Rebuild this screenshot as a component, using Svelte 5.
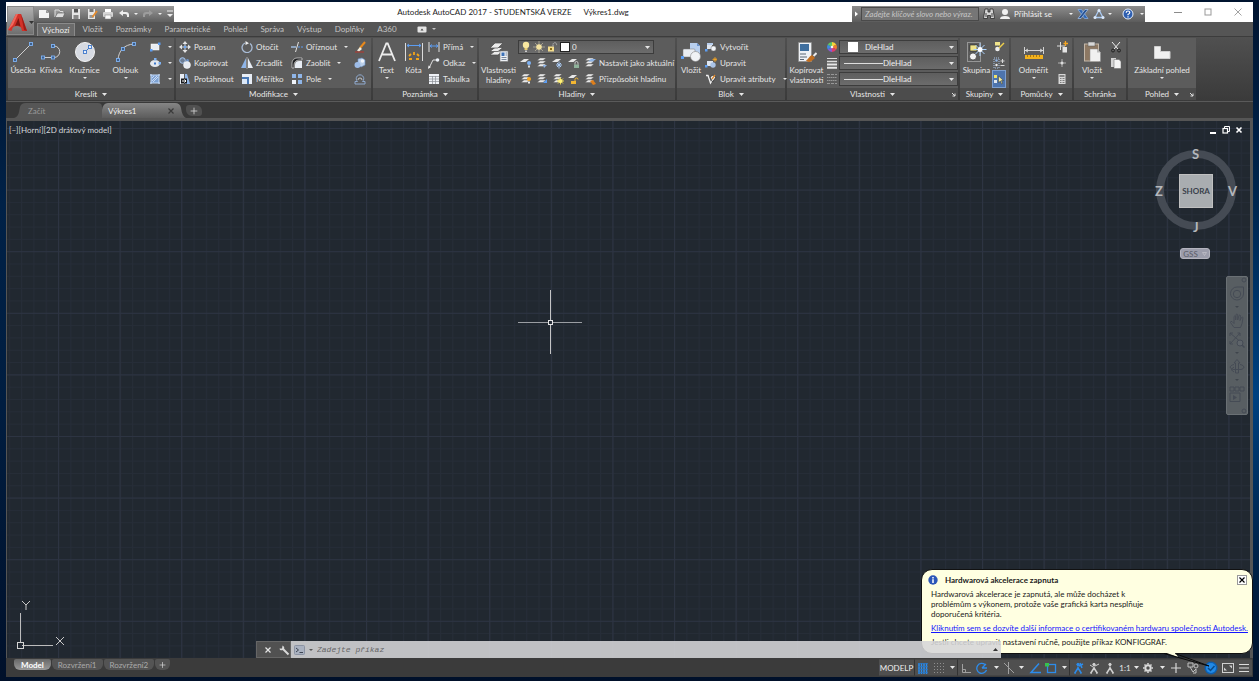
<script>
  const node = (x, y) => `<rect x="${x - 1.5}" y="${y - 1.5}" width="3" height="3" fill="#3d5f8c" stroke="#7fb2f2" stroke-width=".9"/>`;
  const sheets = `<g fill="#e8e8e8" stroke="#555" stroke-width=".4"><path d="M1 9.500l3-2.500h6l-3 2.500z"/><path d="M1 6.500l3-2.500h6l-3 2.500z"/><path d="M1 3.500l3-2.500h6l-3 2.500z"/></g>`;
  const sheetOne = `<path d="M0 5l4-3h5l-3.500 3z" fill="#e8e8e8"/>`;
  const person = (c, extra = '') => `<g fill="none" stroke="${c}" stroke-width="1.500"><circle cx="6" cy="2.500" r="1.200" fill="${c}" stroke-width="1"/><path d="M6 4.500v2.500M6 6L2.500 11.500M6 6l3.500 5.500M4 9l-1 2.500M8 9l1 2.500"/>${extra}</g>`;

  const icons = {
    line: [20, 20, `<path d="M2 18L18 2" stroke="#cfcfcf"/>${node(2, 18)}${node(18, 2)}`],
    polyline: [20, 20, `<path d="M2 15.500h11a5.700 5.700 0 0 0 0-11.500h-1" fill="none" stroke="#cfcfcf"/>${node(2, 15.5)}${node(12, 15.5)}${node(12, 4)}`],
    circle: [20, 20, `<circle cx="10" cy="10" r="9.500" fill="#d6dae2" stroke="#f4f4f4"/><path d="M10 10l5-5" stroke="#3976c9"/><rect x="8.500" y="8.500" width="3" height="3" fill="#e8eefa" stroke="#3d78cc" stroke-width=".9"/><rect x="13.500" y="3.500" width="3" height="3" fill="#e8eefa" stroke="#3d78cc" stroke-width=".9"/>`],
    arc: [20, 20, `<path d="M2 18C2.500 9 8 2.500 18 2" fill="none" stroke="#cfcfcf"/>${node(2, 18)}${node(7, 7)}${node(18, 2)}`],
    rect: [12, 12, `<rect x="2" y="3" width="8" height="6" fill="#e8ecf2" stroke="#fff" stroke-width=".5"/><rect x="1" y="8" width="2.500" height="2.500" fill="#5c9df2"/><rect x="9" y="1.500" width="2.500" height="2.500" fill="#5c9df2"/>`],
    ellipse: [12, 12, `<ellipse cx="6" cy="6.500" rx="5" ry="3.500" fill="#e4e8ef"/><rect x="5" y="5.500" width="2" height="2" fill="#3d78cc"/><rect x="5" y="1" width="2.500" height="2.500" fill="#7fb2f2"/><rect x="9.500" y="5" width="2.500" height="2.500" fill="#7fb2f2"/>`],
    hatch: [12, 12, `<rect x="2" y="2" width="8" height="8" fill="#7fa3d4"/><path d="M1 2h10M1 10h10M2 1v10M10 1v10" stroke="#c5dcfb"/><path d="M3 8l5-5M4 9l5-5M3 5l2-2" stroke="#dce9fb" stroke-width=".8"/>`],
    move: [12, 12, `<path d="M6 0l2.500 3h-5zM6 12l2.500-3h-5zM0 6l3-2.500v5zM12 6L9 3.500v5z" fill="#e4e4e4"/><path d="M6 3v6M3 6h6" stroke="#c8d8ee"/><rect x="5" y="5" width="2" height="2" fill="#6ba6f2"/>`],
    copy: [12, 12, `<circle cx="3.500" cy="3.500" r="2.800" fill="#6e7f96" stroke="#a9c9f2"/><circle cx="8.500" cy="3.500" r="1.500" fill="#6e94c8"/><circle cx="8" cy="8" r="3.500" fill="#e6ebf2" stroke="#fff" stroke-width=".5"/>`],
    stretch: [12, 12, `<path d="M1 1h4v10H1z" fill="#e8edf5"/><path d="M6 1h2l3 10H6z" fill="#8fb5e8"/><rect x="2" y="5.500" width="6" height="5" fill="#17191c"/><path d="M3 8h4M5.500 6.500L7 8 5.500 9.500" stroke="#fff" fill="none"/>`],
    rotate: [12, 12, `<path d="M4 2a5 5 0 1 0 5 .5" fill="none" stroke="#a9bcd6" stroke-width="1.300"/><path d="M4.500 0L8 2.200 4.500 4z" fill="#eee"/>`],
    mirror: [12, 12, `<path d="M5 1v10H0z" fill="#8fb5e8"/><path d="M7 1v10h5z" fill="#e8edf5"/><path d="M6 0v12" stroke="#ddd" stroke-width=".6"/>`],
    scale: [12, 12, `<rect x="1" y="1" width="10" height="10" fill="#e8edf5"/><path d="M1 4h7v7H1z" fill="#4a78b5"/><rect x="1" y="6" width="5" height="5" fill="#dce8f8"/>`],
    trim: [12, 12, `<path d="M7.500 1L4.500 11" stroke="#e0e0e0"/><path d="M0 6h5" stroke="#a9c9f2" stroke-width="1.300"/><path d="M7 6h5" stroke="#5c9df2" stroke-dasharray="2 1"/>`],
    fillet: [12, 12, `<path d="M1 11V6a5 5 0 0 1 5-5h5v2H8a5 5 0 0 0-5 5v3z" fill="#1f2022" stroke="#ddd" stroke-width=".7"/><path d="M4 11V8a4 4 0 0 1 4-4h3v7z" fill="#e8edf5"/>`],
    array: [12, 12, `<rect x="1" y="1" width="4" height="4" fill="#8fb5e8"/><rect x="7" y="1" width="4" height="4" fill="#8fb5e8"/><rect x="7" y="7" width="4" height="4" fill="#8fb5e8"/><rect x="1" y="7" width="4" height="4" fill="#f0f4fa"/>`],
    erase: [12, 12, `<path d="M11 1L6 7" stroke="#e8891c" stroke-width="2"/><path d="M6 6l2 2-3 2.500-2-1z" fill="#f1ecdd"/><path d="M1 11h9" stroke="#b8352a"/>`],
    explode: [12, 12, `<path d="M4 2l4-1 3 2v5l-4 2-3-2z" fill="#bcd0ea" stroke="#6d94c9" stroke-width=".6"/><circle cx="3.500" cy="8" r="3" fill="#9dbce8"/><circle cx="8.500" cy="4" r="1.800" fill="#f2f6fc"/>`],
    offset: [12, 12, `<path d="M1 11h10V8.500H8.500a3.800 3.800 0 1 0-5 0H1z" fill="none" stroke="#8fa9cd"/><path d="M4 7a2 2 0 1 1 4 0" fill="none" stroke="#ddd" stroke-width=".8"/>`],
    textA: [20, 20, `<path d="M2 19L9.300 1.500h1.400L18 19M5 12.500h10" fill="none" stroke="#ececec" stroke-width="1.800"/>`],
    dim: [20, 20, `<path d="M1.500 1v18M18.500 1v18" stroke="#dcdcdc"/><path d="M3 3.500h14M5 2L3 3.500 5 5M15 2l2 1.500L15 5" stroke="#5c9df2" fill="none"/><path d="M7 12l-2 2M10 10v3M13 12l2 2M5 17h3M12 17h3" stroke="#f2a51a" stroke-width="1.800"/>`],
    linear: [12, 12, `<path d="M1 1v10M11 1v10" stroke="#e0e0e0"/><path d="M2 5h8M4 3.500L2 5l2 1.500M8 3.500L10 5 8 6.500" stroke="#5c9df2" fill="none"/>`],
    leader: [12, 12, `<path d="M1 11L5 3h3" fill="none" stroke="#e0e0e0"/><circle cx="9.500" cy="3" r="1.800" fill="#eef3fa"/><path d="M0 12l.5-3.500L3 10z" fill="#eee"/>`],
    table: [12, 12, `<rect x="1" y="1" width="10" height="10" fill="#eef1f6"/><path d="M1 3.500h10M1 6h10M1 8.500h10M4.500 3v8M7.500 3v8" stroke="#8b8f96" stroke-width=".7"/>`],
    layerProps: [20, 20, `<g fill="#ececec" stroke="#4b4b4b" stroke-width=".7"><path d="M1 13l5-4h8l-5 4z"/><path d="M1 9.500l5-4h8l-5 4z"/><path d="M1 6l5-5h8l-5 5z"/></g><rect x="11" y="9" width="8" height="10.500" fill="#eef1f6" stroke="#777" stroke-width=".6"/><rect x="12.500" y="10.500" width="3" height="3.500" fill="#3d72b8"/><path d="M16.500 11h1.500M16.500 13h1.500M12.500 15.500h5M12.500 17.500h5" stroke="#5c6f88" stroke-width=".8"/>`],
    bulb: [12, 12, `<circle cx="6" cy="4" r="3.200" fill="#f8e7a0"/><path d="M4.500 7h3v2h-3z" fill="#e9cf73"/><path d="M5 9.500h2v1.500H5z" fill="#ccc"/>`],
    sun: [12, 12, `<path d="M6 0v12M0 6h12M2 2l8 8M10 2l-8 8" stroke="#b5b09c" stroke-width=".8"/><circle cx="6" cy="6" r="2.800" fill="#f3e2a0"/>`],
    unlock: [12, 12, `<rect x="2" y="5.500" width="6" height="5" fill="#f3dc8c"/><path d="M7 5.500V3.500a1.800 1.800 0 0 1 3.600 0v1" fill="none" stroke="#bbb" stroke-dasharray="1.500 .5"/><rect x="4" y="7" width="2" height="2" fill="#8c6d1a"/>`],
    white: [12, 12, `<rect x="1.500" y="1.500" width="9" height="9" fill="#fff" stroke="#222"/>`],
    l1: [12, 12, `${sheetOne}<circle cx="9" cy="6" r="2" fill="#7fb2f2"/><path d="M8 8.500h2v2H8z" fill="#ddd"/>`],
    l2: [12, 12, `${sheets}<path d="M7 8l4 0-3 3z" fill="#8fb5e8"/>`],
    l3: [12, 12, `${sheetOne}<path d="M7 4.500v7M4 8h6M5 6l4 4M9 6l-4 4" stroke="#a9c9f2"/>`],
    l4: [12, 12, `${sheetOne}<rect x="6" y="7.500" width="5" height="3.500" fill="#8fb29a"/><path d="M7 7.500V6a1.500 1.500 0 0 1 3 0v1.500" fill="none" stroke="#ddd" stroke-width=".8"/>`],
    l5: [12, 12, `${sheets}<path d="M4 4.500l3-2.500h5L9 4.500z" fill="#8fb5e8"/>`],
    l6: [12, 12, `${sheets}<circle cx="9" cy="6" r="2" fill="#f5a623"/><path d="M8 8.500h2v2H8z" fill="#eee"/>`],
    l7: [12, 12, `${sheets}<path d="M7 10l4-4v4z" fill="#5c9df2"/>`],
    l8: [12, 12, `${sheets}<path d="M8.500 4.500v7M5 8h7M6 5.500l5 5M11 5.500l-5 5" stroke="#f7e04a" stroke-width=".9"/><circle cx="8.500" cy="8" r="2" fill="#fff27a"/>`],
    l9: [12, 12, `${sheetOne}<rect x="3" y="8" width="5" height="3" fill="#f2b632"/><path d="M7 8V6.500a1.500 1.500 0 0 1 3 0" fill="none" stroke="#f2b632"/>`],
    l10: [12, 12, `${sheets}<path d="M6 8l3-1 3 4-3 1z" fill="#e07f1b"/>`],
    insert: [20, 20, `<path d="M9 1h7l3 3v9H9z" fill="#b9cfee"/><path d="M16 1v3h3z" fill="#6b94d0"/><rect x="2" y="7" width="12" height="8" rx="1" fill="#e8ecf2" stroke="#777" stroke-width=".5"/><circle cx="14.500" cy="14.500" r="5" fill="#f0f2f5" stroke="#888" stroke-width=".6"/><rect x="0" y="14" width="3" height="3" fill="#5c9df2"/>`],
    bcreate: [12, 12, `<path d="M2 2h6v2H2z" fill="#b9cfee"/><rect x="2" y="4" width="5" height="4" fill="#dfe6f0"/><rect x="6" y="5" width="5" height="5" rx="2" fill="#f3f5f8" stroke="#666" stroke-width=".5"/><rect x="0" y="8" width="2.500" height="2.500" fill="#5c9df2"/>`],
    bedit: [12, 12, `<rect x="2" y="4" width="6" height="5" fill="#dfe6f0"/><circle cx="8" cy="8" r="2.700" fill="#aac4e8"/><path d="M10 0v5M7.500 2.500h5M8.500 1l3 3M11.500 1l-3 3" stroke="#f5a623" stroke-width=".8"/><rect x="0" y="8" width="2.500" height="2.500" fill="#5c9df2"/>`],
    battr: [12, 12, `<path d="M1 2.500h2l2.500 7.500 2-3" fill="none" stroke="#f0f0f0" stroke-width="1.300"/><path d="M5 4l3-2 3 2-3.500 5z" fill="#eee" stroke="#222" stroke-width=".7"/><path d="M7 6l3-4" stroke="#d9852a" stroke-width="1.300"/>`],
    matchProps: [20, 20, `<rect x="1.500" y=".5" width="13" height="19" fill="#eef1f6" stroke="#888" stroke-width=".6"/><rect x="3" y="2" width="9" height="7" fill="#3f6f9f"/><path d="M3 12h6M3 15h7M3 17.500h4" stroke="#5b6675"/><path d="M19.500 11l-3 3" stroke="#ececec" stroke-width="2"/><path d="M15 13l3 3-4 3.500c-2 1-4 0-5-1 2-1 3-4 6-5.500z" fill="#c26f20"/>`],
    wheel: [12, 12, `<path d="M6 6V1a5 5 0 0 1 4.300 2.500z" fill="#f4d33a"/><path d="M6 6l4.300-2.500a5 5 0 0 1 0 5z" fill="#f07d2a"/><path d="M6 6l4.300 2.500A5 5 0 0 1 6 11z" fill="#de3d6d"/><path d="M6 6v5a5 5 0 0 1-4.300-2.500z" fill="#8a5bd0"/><path d="M6 6L1.700 8.500a5 5 0 0 1 0-5z" fill="#3f8be0"/><path d="M6 6L1.700 3.500A5 5 0 0 1 6 1z" fill="#62c462"/><circle cx="6" cy="6" r="1.300" fill="#f4f4f4"/>`],
    weights: [12, 12, `<path d="M1 1.500h10" stroke="#ddd"/><path d="M1 4.500h10" stroke="#ddd" stroke-width="1.500"/><path d="M1 7.500h10M1 10.800h10" stroke="#e8e8e8" stroke-width="2"/>`],
    ltypes: [12, 12, `<path d="M1 1.500h10M1 10.500h10" stroke="#989898" stroke-dasharray="3 1"/><path d="M1 4.500h10M1 7.500h10" stroke="#989898" stroke-dasharray="1.500 .5"/>`],
    group: [20, 20, `<rect x=".5" y=".5" width="13" height="19" fill="none" stroke="#d0d0d0" stroke-dasharray="1 1"/><rect x="3" y="3" width="7" height="6" fill="#f0e48a" stroke="#222" stroke-width=".6"/><circle cx="6" cy="14.500" r="3.500" fill="#f2f2f2" stroke="#222" stroke-width=".6"/><path d="M13 1v13M6.500 7.500h13M8.500 3l9 9M17.500 3l-9 9" stroke="#a9d2ff"/><circle cx="13" cy="7.500" r="2.500" fill="#fff"/>`],
    ungroup: [12, 12, `<rect x="2" y="1" width="5" height="3.500" fill="#f0e48a"/><circle cx="4.500" cy="8" r="2.300" fill="#eee"/><path d="M11 2L6 7" stroke="#f0d04a" stroke-width="1.500"/>`],
    groupEdit: [12, 12, `<rect x="1" y="1" width="5" height="10" fill="none" stroke="#aac4e8" stroke-dasharray="1 1"/><circle cx="3.500" cy="3.500" r="1.200" fill="#8fb5e8"/><circle cx="3.500" cy="8" r="1.200" fill="#eee"/><path d="M9.500 2v4M7.500 4h4M7.500 8.500h4" stroke="#d8d8d8"/>`],
    groupSel: [12, 12, `<rect x="1" y="2" width="3" height="3" fill="#efe06c"/><rect x="1" y="7" width="3" height="3" fill="#dfe6ee"/><path d="M5.500 3l5 4.500H8.500l1 3-1 .500-1-3-2 1.500z" fill="#f5eda0" stroke="#333" stroke-width=".5"/>`],
    measure: [20, 20, `<path d="M.5 5v7M19.500 5v7M1 8.500h18M4 7L1.500 8.500 4 10M16 7l2.500 1.500L16 10" fill="none" stroke="#e0e0e0" stroke-width=".9"/><rect x="1" y="13" width="18" height="4" fill="#f2b21e"/><path d="M3.500 13v2M6.500 13v2M9.500 13v2M12.500 13v2M15.500 13v2" stroke="#8c5d08" stroke-width=".7"/>`],
    idpoint: [12, 12, `<path d="M4.500 1v8M1 5h8" stroke="#ddd"/><rect x="6.500" y="6" width="4.500" height="5.500" fill="#e4e4e4"/><path d="M9.500 0v5M7.500 2.500h4.500" stroke="#f5a623" stroke-width="1.300"/>`],
    point: [12, 12, `<path d="M6 2v8M2 6h8" stroke="#b0b0b0"/><circle cx="6" cy="6" r="1.500" fill="#dcdcdc"/>`],
    calc: [12, 12, `<rect x="2.500" y="1" width="7" height="10" fill="#d8d8d8"/><path d="M3.500 3h5" stroke="#555" stroke-width="1.300"/><path d="M4 5.500h5M4 7.500h5M4 9.500h5" stroke="#666" stroke-width=".8" stroke-dasharray="1 .5"/>`],
    paste: [20, 20, `<rect x="2.500" y="2" width="14" height="17" fill="#8d7863" stroke="#c3b7a9"/><rect x="6" y="0" width="7" height="4" fill="#d8d8d8" stroke="#555" stroke-width=".5"/><path d="M8 7h7l3.500 3.500V19.500H8z" fill="#f0f0f0" stroke="#888" stroke-width=".5"/><path d="M15 7v3.500h3.500z" fill="#bbb"/>`],
    cut: [12, 12, `<path d="M2 1l6 7M10 1L4 8" stroke="#efefef"/><circle cx="3" cy="9.500" r="1.500" fill="none" stroke="#222"/><circle cx="9" cy="9.500" r="1.500" fill="none" stroke="#222"/>`],
    clip: [12, 12, `<path d="M1 1h5v9H1z" fill="#d4d4d4"/><path d="M4 2.500h5l2 2V11.500H4z" fill="#f4f4f4" stroke="#666" stroke-width=".5"/>`],
    baseView: [20, 20, `<path d="M2.500 4.500h6v5h9.500v7H2.500z" fill="#f0f0f0" stroke="#cfcfcf"/>`],
    newDoc: [12, 12, `<path d="M1 2h7l3 3v5H1z" fill="#f4f4f4"/><path d="M8 2v3h3z" fill="#999"/>`],
    open: [12, 12, `<path d="M1 9V2h4l1 1.500h3V5" fill="#999" stroke="#ddd"/><path d="M1 9.500l2.500-4.500H11L9 9.500z" fill="#ddd" stroke="#555" stroke-width=".6"/>`],
    save: [12, 12, `<path d="M2 1h8v10H2z" fill="#e6e6e6"/><rect x="4" y="1" width="4" height="3.500" fill="#555"/><rect x="3.500" y="7" width="5" height="4" fill="#888"/>`],
    saveAs: [12, 12, `<path d="M2 1h7v10H2z" fill="#e6e6e6"/><rect x="3.500" y="1" width="4" height="3" fill="#777"/><path d="M3.500 7h4v3h-4z" fill="#999"/><path d="M11 3L6.500 9" stroke="#e58c2e" stroke-width="1.800"/>`],
    print: [12, 12, `<rect x="3" y="1" width="6" height="4" fill="#fff"/><rect x="1" y="4" width="10" height="5" rx="1" fill="#d6d6d6"/><rect x="3" y="7" width="6" height="4" fill="#fafafa" stroke="#777" stroke-width=".5"/>`],
    undo: [12, 12, `<path d="M1 5l4-3v2h3q3 0 3 3v2H9V7.500Q9 6 7.500 6H5v2z" fill="#eee"/>`],
    redo: [12, 12, `<path d="M11 5L7 2v2H4Q1 4 1 7v2h2V7.500Q3 6 4.500 6H7v2z" fill="#9c9c9c"/>`],
    more: [8, 10, `<path d="M1 2h6" stroke="#eee"/><path d="M1 5h6L4 8z" fill="#eee"/>`],
    logo: [22, 22, `<path d="M9 2h5l6 17h-5l-1-3.500C10 13 7 14 5.500 16L4.500 19 1 18z" fill="#d23229"/><path d="M9 2l2 0-5 11-5 5z" fill="#f0685c"/><path d="M11.500 6L8 14q3-1 5.500.500z" fill="#7f1712"/><path d="M14 2l6 17-3-1z" fill="#9e1d17"/>`],
    binoc: [12, 12, `<path d="M2 1h3v3h2V1h3l1.500 9.500h-4V7.500h-3v3H.5z" fill="#d8d8d8" stroke="#2b2b2b" stroke-width=".8"/><path d="M3 5v4M9 5v4" stroke="#444"/>`],
    user: [12, 12, `<circle cx="6" cy="4" r="3" fill="#f0f0f0"/><path d="M1 11q0-3 5-3t5 3z" fill="#f0f0f0"/>`],
    exch: [12, 12, `<path d="M1 1.500h3.500l6.500 9H7.500z" fill="#3268b4" stroke="#8fb5e8" stroke-width=".7"/><path d="M11 1.500H8l-7 9h3z" fill="#28518f" stroke="#a9c9f2" stroke-width=".7"/>`],
    a360: [12, 12, `<path d="M6 2L2 9.500h8z" fill="none" stroke="#a9c9f2" stroke-width="1.300"/><circle cx="6" cy="2.500" r="1.500" fill="#dce9fa"/><circle cx="2" cy="9.500" r="1.500" fill="#dce9fa"/><circle cx="10" cy="9.500" r="1.500" fill="#dce9fa"/>`],
    help: [12, 12, `<circle cx="6" cy="6" r="5" fill="#2d5eb0" stroke="#e6eefa"/><path d="M4.200 4.700Q4.300 3 6 3t1.800 1.500Q7.800 5.500 6 6.500v.8M6 8.200v1.200" fill="none" stroke="#fff" stroke-width="1.200"/>`],
    gridOn: [12, 12, `<path d="M2 1v11M4.500 1v11M7 1v11M9.500 1v11" stroke="#2d8ceb" stroke-width="1.500"/><path d="M1 1.500h10M1 4.500h10M1 7.500h10M1 10.500h10" stroke="#2876c4" stroke-width=".8"/>`],
    dots: [12, 12, `<path d="M1 1.500h11M1 4.500h11M1 7.500h11M1 10.500h11" stroke="#8f8f8f" stroke-dasharray="1 2"/>`],
    ortho: [12, 12, `<path d="M2.500 2v8.500H11M2.500 7.500h3v3" fill="none" stroke="#a0a0a0"/>`],
    polar: [12, 12, `<path d="M10.500 8A5 5 0 1 1 9 2.500M6 6h5M6 6l4-4" fill="none" stroke="#2d8ceb" stroke-width="1.300"/>`],
    iso: [12, 12, `<path d="M1 1l10 10M5.500 0v12" stroke="#a0a0a0"/>`],
    angle: [12, 12, `<path d="M10 1.500L2 10.500h10" fill="none" stroke="#2d8ceb" stroke-width="1.500"/>`],
    osnap: [12, 12, `<rect x="2.500" y="2.500" width="8" height="8" fill="none" stroke="#2d8ceb" stroke-width="1.300"/><rect x="0" y="1" width="4" height="3.500" fill="#37c24d"/>`],
    p1: [12, 12, person('#2d8ceb', '<path d="M7 4l4-2M8 1l2 5"/>')],
    p2: [12, 12, person('#d0d0d0', '<path d="M7 4l4-2M2 3l3 2" stroke-width="1"/>')],
    p3: [12, 12, person('#d0d0d0')],
    gear: [12, 12, `<circle cx="6" cy="6" r="2.700" fill="none" stroke="#dadada" stroke-width="2"/><path d="M6 1v1.500M6 9.500V11M1 6h1.500M9.500 6H11M2.500 2.500l1 1M8.500 8.500l1 1M9.500 2.500l-1 1M3.500 8.500l-1 1" stroke="#dadada" stroke-width="1.500"/>`],
    plus: [12, 12, `<path d="M6 1v10M1 6h10" stroke="#d8d8d8" stroke-width="1.200"/>`],
    isolate: [12, 12, `<path d="M1 1h5v4H1z" fill="none" stroke="#c0c0c0"/><circle cx="9" cy="4" r="2" fill="none" stroke="#c0c0c0"/><path d="M3 5l3 5 3-3v4H6" fill="none" stroke="#c0c0c0"/>`],
    hw: [14, 14, `<circle cx="7" cy="7" r="6.500" fill="#0d5fb0"/><circle cx="7" cy="7" r="5" fill="#2189e6"/><path d="M4 7l2.500 2.500L10.500 5" fill="none" stroke="#0b4a88" stroke-width="1.500"/>`],
    clean: [12, 12, `<rect x=".5" y="1.500" width="11" height="9" fill="none" stroke="#d0d0d0"/><path d="M7 3.500h3v3zM5 8.500H2v-3z" fill="#d0d0d0"/>`],
    burger: [12, 12, `<path d="M1 2.500h10M1 6h10M1 9.500h10" stroke="#dcdcdc" stroke-width="1.200"/>`],
    min: [12, 12, `<path d="M2 6.500h8" stroke="#8b8b8b"/>`],
    max: [12, 12, `<rect x="3" y="3" width="6" height="6" fill="none" stroke="#999"/>`],
    close: [12, 12, `<path d="M2.500 2.500l7 7M9.500 2.500l-7 7" stroke="#8b8b8b" stroke-width=".8"/>`],
    vmin: [10, 10, `<path d="M2 8h6" stroke="#fff" stroke-width="2"/>`],
    vmax: [10, 10, `<path d="M3.500 3V1.500h5V6.500H7" fill="none" stroke="#fff"/><rect x="2" y="3.500" width="4.500" height="4.500" fill="none" stroke="#fff" stroke-width="1.200"/>`],
    vclose: [10, 10, `<path d="M2.500 2.500l5 5M7.500 2.500l-5 5" stroke="#fff" stroke-width="1.600"/>`],
    swatch: [12, 12, `<rect x="1" y="1" width="10" height="10" fill="#fff"/>`],
    wrench: [12, 12, `<path d="M5 5l5.500 5.500" stroke="#d8d8d8" stroke-width="2"/><path d="M1.500 4.500L4 4.500 4.500 1.500Q7 3 6 5T2 6z" fill="#d8d8d8"/>`],
    x: [8, 8, `<path d="M1.500 1.500l5 5M6.500 1.500l-5 5" stroke="currentColor" stroke-width="1.200"/>`],
    prompt: [11, 10, `<rect x=".5" y=".5" width="10" height="9" rx="1" fill="#a9b1c0" stroke="#8b93a3"/><path d="M2 3l2.500 2L2 7M5.500 7.500H9" fill="none" stroke="#3c4452"/>`],
    info: [10, 10, `<circle cx="5" cy="5" r="4.700" fill="#2c56b8"/><path d="M5 2v1.400M5 4.300V8" stroke="#fff" stroke-width="1.500"/>`],
    wheelNav: [16, 16, `<path d="M8 1h6.500v7A6.500 6.500 0 1 1 8 1z" fill="none" stroke="#454b55"/><circle cx="8" cy="8" r="3.700" fill="none" stroke="#454b55"/>`],
    hand: [16, 16, `<path d="M5 14.500L1.500 9.500q0-1.500 1.500-1l2 2V3.500q1-1.500 1.700 0V7l.3-5.500q1-1 1.700 0V7L10 2.500q1-1 1.500 0L11 7.500l1.500-3q1-.8 1.500 0Q13.500 11 11.500 14.500z" fill="none" stroke="#454b55" stroke-width=".9"/>`],
    zoomNav: [16, 16, `<path d="M1 1l12 10M11 1L1 12M1 4V1h3M8.500 1H11v3M1 9v3h3" fill="none" stroke="#454b55"/><circle cx="11" cy="11" r="3" fill="#5e646a" stroke="#454b55"/><path d="M13 13l2.500 2.500" stroke="#454b55" stroke-width="1.500"/>`],
    orbit: [16, 16, `<path d="M6.500 14V4H5l3-3.500L11 4H9.500v10z" fill="none" stroke="#454b55"/><path d="M5 5.500C0 6.500 0 10 5 10.500h7M11 5.500c5 1 5 4 1 5M5 8L2 10.500 5 13" fill="none" stroke="#454b55"/>`],
    motion: [16, 16, `<path d="M1 1h4v4H1zM6 1h4v4H6zM11 1h4v4h-4zM1 7h10v8.500H1z" fill="none" stroke="#454b55"/><path d="M4 9v5l4-2.500z" fill="#454b55"/>`],
    dot: [6, 6, `<circle cx="3" cy="3" r="2" fill="none" stroke="#454b55"/>`],
    play: [10, 7, `<rect x=".5" y=".5" width="9" height="6" rx="1" fill="#e4e4e4"/><path d="M3.500 4.500L5 2.500l1.500 2z" fill="#444"/>`],
    launcher: [5, 5, `<path d="M1 1l3 3M4 1.500V4H1.500" fill="none" stroke="#e0e0e0"/>`]
  };

  const menu = ['Vložit', 'Poznámky', 'Parametrické', 'Pohled', 'Správa', 'Výstup', 'Doplňky', 'A360'];
  const props = ['weights', 'ltypes'];
</script>

{#snippet ico(name)}
  <svg class="ico" width={icons[name][0]} height={icons[name][1]} viewBox="0 0 {icons[name][0]} {icons[name][1]}" aria-hidden="true">{@html icons[name][2]}</svg>
{/snippet}

{#snippet caret()}
  <svg class="ico" width="5" height="3" viewBox="0 0 5 3" aria-hidden="true"><path d="M0 0h5L2.500 3z" fill="currentColor" /></svg>
{/snippet}

{#snippet mini()}
  <svg class="ico mini" width="4" height="2" viewBox="0 0 4 2" aria-hidden="true"><path d="M0 0h4L2 2z" fill="currentColor" /></svg>
{/snippet}

{#snippet big(name, label, menuArrow, second)}
  <button class="big">
    {@render ico(name)}
    <span>{label}</span>
    {#if second}<span>{second}</span>{/if}
    {#if menuArrow}{@render mini()}{/if}
  </button>
{/snippet}

{#snippet tool(name, label, menuArrow)}
  <button class="tool">
    {@render ico(name)}
    {#if label}<span>{label}</span>{/if}
    {#if menuArrow}{@render mini()}{/if}
  </button>
{/snippet}

{#snippet foot(label, arrow, launch)}
  <footer>
    <span>{label}</span>
    {#if arrow}{@render caret()}{/if}
    {#if launch}<i>{@render ico('launcher')}</i>{/if}
  </footer>
{/snippet}

<div class="desktop">
  <div class="window">
    <header class="top">
      <button class="app">{@render ico('logo')}{@render caret()}</button>
      <div class="title">
        <div class="qat">
          {#each ['newDoc', 'open', 'save', 'saveAs', 'print', 'undo'] as n}<button>{@render ico(n)}</button>{/each}
          {@render mini()}
          <button class="dim">{@render ico('redo')}</button>
          {@render mini()}
          <button class="last">{@render ico('more')}</button>
        </div>
        <h1><span>Autodesk AutoCAD 2017 - STUDENTSKÁ VERZE</span><span>Výkres1.dwg</span></h1>
        <div class="info">
          <svg class="ico" width="9" height="16" viewBox="0 0 9 16"><path d="M3 5.500v5L6 8z" fill="#fff" /></svg>
          <input class="search" aria-label="Hledat" placeholder="Zadejte klíčové slovo nebo výraz." />
          <button>{@render ico('binoc')}</button>
          <button class="login">{@render ico('user')}<span>Přihlásit se</span></button>
          {@render mini()}
          <button>{@render ico('exch')}</button>
          <button>{@render ico('a360')}{@render mini()}</button>
          <button class="help">{@render ico('help')}{@render mini()}</button>
        </div>
        <div class="winbtns">
          {#each ['min', 'max', 'close'] as n}<button>{@render ico(n)}</button>{/each}
        </div>
      </div>
      <nav class="menu">
        <button class="active">Výchozí</button>
        {#each menu as m}<button>{m}</button>{/each}
        <button class="play">{@render ico('play')}{@render mini()}</button>
      </nav>
    </header>

    <div class="ribbon">
      <section class="p-draw">
        <div class="body">
          {@render big('line', 'Úsečka')}
          {@render big('polyline', 'Křivka')}
          {@render big('circle', 'Kružnice', true)}
          {@render big('arc', 'Oblouk', true)}
          <div class="col">
            {@render tool('rect', '', true)}
            {@render tool('ellipse', '', true)}
            {@render tool('hatch', '', true)}
          </div>
        </div>
        {@render foot('Kreslit', true)}
      </section>
      <section class="p-modify">
        <div class="body">
          <div class="col">
            {@render tool('move', 'Posun')}
            {@render tool('copy', 'Kopírovat')}
            {@render tool('stretch', 'Protáhnout')}
          </div>
          <div class="col">
            {@render tool('rotate', 'Otočit')}
            {@render tool('mirror', 'Zrcadlit')}
            {@render tool('scale', 'Měřítko')}
          </div>
          <div class="col">
            {@render tool('trim', 'Oříznout', true)}
            {@render tool('fillet', 'Zaoblit', true)}
            {@render tool('array', 'Pole', true)}
          </div>
          <div class="col">
            {@render tool('erase')}
            {@render tool('explode')}
            {@render tool('offset')}
          </div>
        </div>
        {@render foot('Modifikace', true)}
      </section>
      <section class="p-note">
        <div class="body">
          {@render big('textA', 'Text', true)}
          {@render big('dim', 'Kóta')}
          <div class="col">
            {@render tool('linear', 'Přímá', true)}
            {@render tool('leader', 'Odkaz', true)}
            {@render tool('table', 'Tabulka')}
          </div>
        </div>
        {@render foot('Poznámka', true)}
      </section>
      <section class="p-layer">
        <div class="body">
          {@render big('layerProps', 'Vlastnosti', false, 'hladiny')}
          <div class="col">
            <div class="combo layer">
              {@render ico('bulb')}{@render ico('sun')}{@render ico('unlock')}{@render ico('white')}
              <select aria-label="Hladina"><option>0</option></select>
              {@render caret()}
            </div>
            <div class="strip">
              {#each ['l1', 'l2', 'l3', 'l4'] as n}<button>{@render ico(n)}</button>{/each}
              {@render tool('l5', 'Nastavit jako aktuální')}
            </div>
            <div class="strip">
              {#each ['l6', 'l7', 'l8', 'l9'] as n}<button>{@render ico(n)}</button>{/each}
              {@render tool('l10', 'Přizpůsobit hladinu')}
            </div>
          </div>
        </div>
        {@render foot('Hladiny', true)}
      </section>
      <section class="p-block">
        <div class="body">
          {@render big('insert', 'Vložit')}
          <div class="col">
            {@render tool('bcreate', 'Vytvořit')}
            {@render tool('bedit', 'Upravit')}
            {@render tool('battr', 'Upravit atributy', true)}
          </div>
        </div>
        {@render foot('Blok', true)}
      </section>
      <section class="p-props">
        <div class="body">
          {@render big('matchProps', 'Kopírovat', false, 'vlastnosti')}
          <div class="col grow">
            <div class="prop">
              {@render ico('wheel')}
              <div class="combo color">
                {@render ico('swatch')}
                <select aria-label="Barva"><option>DleHlad</option></select>
                {@render caret()}
              </div>
            </div>
            {#each props as n}
              <div class="prop">
                {@render ico(n)}
                <div class="combo">
                  <hr />
                  <select aria-label={n === 'weights' ? 'Tloušťka čáry' : 'Typ čáry'}><option>DleHlad</option></select>
                  {@render caret()}
                </div>
              </div>
            {/each}
          </div>
        </div>
        {@render foot('Vlastnosti', true, true)}
      </section>
      <section class="p-group">
        <div class="body">
          {@render big('group', 'Skupina')}
          <div class="col">
            {@render tool('ungroup')}
            {@render tool('groupEdit')}
            <div class="pressed">{@render tool('groupSel')}</div>
          </div>
        </div>
        {@render foot('Skupiny', true)}
      </section>
      <section class="p-util">
        <div class="body">
          {@render big('measure', 'Odměřit', true)}
          <div class="col">
            {@render tool('idpoint')}
            {@render tool('point')}
            {@render tool('calc')}
          </div>
        </div>
        {@render foot('Pomůcky', true)}
      </section>
      <section class="p-clip">
        <div class="body">
          {@render big('paste', 'Vložit', true)}
          <div class="col">
            {@render tool('cut')}
            {@render tool('clip')}
          </div>
        </div>
        {@render foot('Schránka')}
      </section>
      <section class="p-view">
        <div class="body">{@render big('baseView', 'Základní pohled', true)}</div>
        {@render foot('Pohled', true, true)}
      </section>
    </div>

    <nav class="files">
      <button class="file">
        <svg class="shape" viewBox="0 0 88 15" preserveAspectRatio="none"><path d="M0 15Q4 14 5 9L6 4Q7 0 12 0H84Q88 0 88 4V15z" fill="#565656" /></svg>
        <span>Začít</span>
      </button>
      <button class="file on">
        <svg class="shape" viewBox="0 0 84 15" preserveAspectRatio="none">
          <defs><linearGradient id="ft" x2="0" y2="1"><stop stop-color="#858585" /><stop offset="1" stop-color="#5c5c5c" /></linearGradient></defs>
          <path d="M0 15V7Q1 0 6 0H73Q78 0 79 5Q80 13 84 15z" fill="url(#ft)" />
        </svg>
        <span>Výkres1</span>
        <em>{@render ico('x')}</em>
      </button>
      <button class="add">{@render ico('plus')}</button>
    </nav>

    <main>
      <svg class="grid" width="100%" height="100%" aria-hidden="true">
        <defs>
          <pattern id="minor" x="51" y="7" width="12.320" height="12.320" patternUnits="userSpaceOnUse"><path d="M.5 0V13M0 .5H13" stroke="#262d38" /></pattern>
          <pattern id="major" x="51" y="7" width="61.600" height="61.600" patternUnits="userSpaceOnUse"><path d="M.5 0V62M0 .5H62" stroke="#2d3442" /></pattern>
        </defs>
        <rect width="100%" height="100%" fill="url(#minor)" />
        <rect width="100%" height="100%" fill="url(#major)" />
      </svg>
      <div class="viewhead">
        <span>[−][Horní][2D drátový model]</span>
        <div>{#each ['vmin', 'vmax', 'vclose'] as n}<button>{@render ico(n)}</button>{/each}</div>
      </div>

      <svg class="cross" width="64" height="64" viewBox="0 0 64 64" aria-hidden="true">
        <path d="M32.500 0v30M32.500 35v29" stroke="#c4c4c4" /><path d="M0 32.500h30M35 32.500h29" stroke="#9a9da2" />
        <rect x="30.500" y="30.500" width="4" height="4" fill="none" stroke="#e4e4e4" />
      </svg>

      <svg class="ucs" width="50" height="50" viewBox="0 0 50 50" aria-hidden="true">
        <path d="M4.500 14v30M6 46.500h31" stroke="#bcbcbc" fill="none" />
        <rect x="1.500" y="43.500" width="6" height="6" fill="none" stroke="#d4d4d4" />
        <path d="M6 2l4 4 4-4M10 6v5M40 38l8 8M48 38l-8 8" stroke="#c8c8c8" fill="none" />
      </svg>

      <aside class="cube">
        <svg width="82" height="82" viewBox="0 0 82 82" aria-hidden="true"><circle cx="41" cy="41" r="36" fill="none" stroke="#454b54" stroke-width="8" /></svg>
        <b class="n">S</b><b class="s">J</b><b class="w">Z</b><b class="e">V</b>
        <button>SHORA</button>
      </aside>
      <button class="gss">GSS <svg width="5" height="4" viewBox="0 0 5 4"><path d="M.5.5h4L2.500 3.500z" fill="none" stroke="#c4c4cc" stroke-width=".7" /></svg></button>

      <div class="navbar">
        <i>{@render ico('dot')}</i>
        <button>{@render ico('wheelNav')}</button>{@render mini()}
        <button>{@render ico('hand')}</button>
        <button>{@render ico('zoomNav')}</button>{@render mini()}
        <button>{@render ico('orbit')}</button>{@render mini()}
        <button>{@render ico('motion')}</button>
        <i class="end">{@render ico('dot')}</i>
      </div>

      <div class="balloon" role="status">
        <div class="bhead">{@render ico('info')}<strong>Hardwarová akcelerace zapnuta</strong><button>{@render ico('x')}</button></div>
        <p>Hardwarová akcelerace je zapnutá, ale může docházet k<br />problémům s výkonem, protože vaše grafická karta nesplňuje<br />doporučená kritéria.</p>
        <p><a href="#hardware">Kliknutím sem se dozvíte další informace o certifikovaném hardwaru společnosti Autodesk.</a></p>
        <p>Jestli chcete upravit nastavení ručně, použijte příkaz KONFIGGRAF.</p>
        <svg class="tail" width="50" height="16" viewBox="0 0 50 16" aria-hidden="true"><path d="M0 0L14 5 11 0z" fill="#ffffe1" /><path d="M0 1.500L45 14M11 1.500L45 14" fill="none" stroke="#0a0a0a" /></svg>
      </div>

      <div class="cmd">
        <div class="grip">
          <svg width="5" height="12" viewBox="0 0 5 12"><path d="M0 .5h5M0 2.500h5M0 4.500h5M0 6.500h5M0 8.500h5M0 10.500h5" stroke="#777" /></svg>
          <button>{@render ico('x')}</button>
          <button>{@render ico('wrench')}</button>
        </div>
        <label>
          {@render ico('prompt')}{@render mini()}
          <input aria-label="Příkazový řádek" placeholder="Zadejte příkaz" />
          <svg class="up" width="5" height="3" viewBox="0 0 5 3"><path d="M0 3h5L2.500 0z" fill="#333" /></svg>
        </label>
      </div>
    </main>

    <footer class="status">
      <div class="layouts">
        <button class="on">Model</button>
        <button>Rozvržení1</button>
        <button>Rozvržení2</button>
        <button class="plus">{@render ico('plus')}</button>
      </div>
      <div class="toggles">
        <button class="model">MODELP</button>
        <button>{@render ico('gridOn')}</button>
        <button>{@render ico('dots')}</button>
        <button class="arrow end">{@render caret()}</button>
        <button>{@render ico('ortho')}</button>
        <button>{@render ico('polar')}</button>
        <button class="arrow">{@render caret()}</button>
        <button class="slim">{@render ico('iso')}</button>
        <button class="arrow">{@render caret()}</button>
        <button>{@render ico('angle')}</button>
        <button>{@render ico('osnap')}</button>
        <button class="arrow end">{@render caret()}</button>
        <button>{@render ico('p1')}</button>
        <button>{@render ico('p2')}</button>
        <button>{@render ico('p3')}</button>
        <button class="ratio">1:1 {@render caret()}</button>
        <button>{@render ico('gear')}</button>
        <button class="arrow">{@render caret()}</button>
        <button>{@render ico('plus')}</button>
        <button class="wide">{@render ico('isolate')}</button>
        <button class="wide">{@render ico('hw')}</button>
        <button>{@render ico('clean')}</button>
        <button>{@render ico('burger')}</button>
      </div>
    </footer>
  </div>
</div>

<style>
  :global(body) { background: #001a3a; }
  .desktop {
    box-sizing: border-box;
    min-height: 100vh;
    display: flex;
    padding: 2px 6px 4px;
    background:
      linear-gradient(180deg, #001430 0, #00264f 30%, #004180 58%, #00244c 80%, #00122b 100%) right / 6px 100% no-repeat,
      linear-gradient(180deg, #00142f 0, #002147 30%, #001d40 60%, #00102a 100%);
    font: 8px/10px Lato, "Noto Sans", sans-serif;
    color: #e6e6e6;
  }
  button { all: unset; box-sizing: border-box; display: flex; align-items: center; justify-content: center; cursor: default; white-space: nowrap; }
  .ico { display: block; flex: none; }
  .window { flex: 1; min-width: 0; display: flex; flex-direction: column; background: #3b3b3b; }

  .top { display: grid; grid-template-columns: 28px 1fr; grid-template-rows: 20px 14px; background: linear-gradient(#fff 20px, #555 20px); }
  .app { grid-row: 1 / 3; margin: 4px 0 1px 1px; background: linear-gradient(#b0b0b0, #6f6f6f); border: 1px solid #888; gap: 0; color: #333; align-items: flex-end; }
  .app > :global(svg:last-child) { margin-bottom: 10px; }
  .title { display: flex; align-items: flex-end; color: #1c1c1c; }
  .qat { box-sizing: border-box; display: flex; align-items: center; height: 16px; padding-left: 4px; width: 140px; gap: 4px; background: linear-gradient(#9a9a9a, #5f5f5f); color: #eee; }
  .qat .last { margin-left: auto; padding-right: 2px; }
  h1 { flex: 1; margin: 0; display: flex; justify-content: center; gap: 12px; height: 20px; line-height: 20px; font-size: 8px; font-weight: 400; }
  .info { display: flex; align-items: center; height: 16px; width: 293px; background: linear-gradient(#8c8c8c, #5c5c5c); color: #f0f0f0; gap: 4px; }
  .search { box-sizing: border-box; width: 118px; height: 14px; padding: 0 3px; margin-left: -4px; border: 1px solid #4a4a4a; background: #767676; font: italic 8px/12px Lato, sans-serif; color: #eee; }
  .search::placeholder { color: #c6c6c6; opacity: 1; }
  .info .login { gap: 3px; margin-right: 13px; }
  .info button { gap: 3px; }
  .info .help { margin-left: 6px; gap: 6px; }
  .winbtns { display: flex; width: 108px; height: 20px; align-items: center; justify-content: flex-end; gap: 18px; padding-right: 9px; box-sizing: border-box; }

  .menu { display: flex; gap: 1px; background: #555; color: #c4c4c4; }
  .menu button { padding: 0 6px; }
  .menu .active { background: #6b6b6b; border: 1px solid #8a8a8a; border-bottom: 0; color: #f0f0f0; margin: 1px 1px 0 3px; padding: 0 4px; }
  .menu .play { gap: 5px; padding: 0 13px; }

  .ribbon { display: flex; gap: 2px; height: 66px; box-sizing: border-box; padding: 1px 2px; background: linear-gradient(#505050, #3a3a3a); border-top: 1px solid #3c3c3c; border-bottom: 1px solid #5a5a5a; }
  section { flex: none; display: flex; flex-direction: column; background: #5c5c5c; }
  .body { flex: 1; display: flex; }
  section footer { height: 12px; display: flex; align-items: center; justify-content: center; gap: 5px; background: #4c4c4c; position: relative; }
  section footer i { position: absolute; right: 2px; }
  .big { flex-direction: column; justify-content: flex-start; padding-top: 4px; flex: none; }
  .big span { line-height: 10px; }
  .big > span:first-of-type { margin-top: 3px; }
  .big > :global(.mini) { margin-top: 2px; }
  .col { display: flex; flex-direction: column; padding-top: 1px; }
  .grow { flex: 1; }
  .tool { height: 16px; gap: 3px; justify-content: flex-start; flex: none; }
  .tool > :global(.mini) { margin-left: 4px; }

  .p-draw { width: 166px; }
  .p-draw .big { width: 41px; }
  .p-draw .big:nth-child(1) { width: 30px; }
  .p-draw .big:nth-child(2) { width: 26px; }
  .p-draw .col { margin-left: 3px; }
  .p-modify { width: 195px; }
  .p-modify .col { width: 50px; }
  .p-modify .col:nth-child(1) { width: 62px; margin-left: 3px; }
  .p-modify .col:nth-child(3) { width: 63px; }
  .p-modify .col:nth-child(4) { width: 14px; }
  .p-note { width: 104px; }
  .p-note .big { width: 27px; }
  .p-note .col { margin-left: 1px; }
  .p-layer { width: 196px; }
  .p-layer .big { width: 39px; }
  .strip { display: flex; align-items: center; gap: 4px; height: 16px; padding-left: 2px; }
  .p-block { width: 108px; }
  .p-block .big { width: 28px; }
  .p-props { width: 171px; }
  .p-props .big { width: 39px; }
  .p-group { width: 49px; }
  .p-group .big { width: 33px; }
  .p-util { width: 61px; }
  .p-util .big { width: 45px; }
  .p-clip { width: 52px; }
  .p-clip .big { width: 36px; }
  .p-view { width: 68px; }
  .p-view .big { width: 68px; }
  .pressed { background: #4d74ad; outline: 1px solid #7d9fd0; }

  .combo { flex: 1; min-width: 0; display: flex; align-items: center; height: 14px; box-sizing: border-box; padding: 0 3px 0 4px; background: linear-gradient(#5e5e5e, #6c6c6c); border: 1px solid #3c3c3c; }
  .combo select { all: unset; flex: 1; min-width: 0; font: inherit; color: #eee; }
  .combo hr { width: 39px; margin: 0; border: 0; border-top: 1px solid #ddd; }
  .layer { flex: none; width: 136px; margin: 1px 0; padding-left: 1px; gap: 1px; }
  .color { padding-left: 7px; }
  .color select { padding-left: 6px; }
  .prop { display: flex; align-items: center; gap: 1px; height: 16px; }

  .files { display: flex; height: 16px; box-sizing: border-box; padding: 1px 0 0 8px; background: #393939; }
  .file { position: relative; width: 88px; justify-content: flex-start; padding-left: 14px; color: #9b9b9b; }
  .file.on { width: 84px; padding-left: 6px; color: #f0f0f0; }
  .file span, .file em { position: relative; }
  .file em { margin-left: auto; margin-right: 11px; color: #3a3a3a; }
  .shape { position: absolute; inset: 0; width: 100%; height: 100%; }
  .add { width: 16px; height: 11px; margin: 2px 0 0 0; border-radius: 3px 6px 3px 6px; background: #505050; }
  .add :global(svg) { width: 8px; }

  main { position: relative; flex: 1; min-height: 0; background: #212830; border: solid #555; border-width: 3px 3px 0 1px; overflow: visible; }
  .grid { position: absolute; inset: 0; }
  .viewhead { position: relative; display: flex; justify-content: space-between; padding: 4px 6px 0 2px; color: #d6d9dc; }
  .viewhead div { display: flex; gap: 3px; }
  .cross { position: absolute; left: 511px; top: 169px; }
  .ucs { position: absolute; left: 9px; bottom: 9px; }
  .cube { position: absolute; top: 28px; right: 13px; width: 82px; height: 82px; font-size: 13px; color: #b5b8bc; }
  .cube b { position: absolute; }
  .cube .n { top: 0; left: 37px; }
  .cube .s { bottom: -1px; left: 38px; }
  .cube .w { left: 0; top: 37px; }
  .cube .e { right: 0; top: 37px; }
  .cube button { position: absolute; left: 24px; top: 25px; width: 34px; height: 34px; background: #a9adb0; border: 1px solid #c0c0c0; font-size: 8px; font-weight: 700; color: #39414b; }
  .gss { position: absolute; top: 127px; right: 40px; width: 30px; height: 11px; border-radius: 3px; background: #9c9dab; border: 1px solid #b4b4be; color: #5a5c68; font-size: 8px; gap: 4px; }
  .navbar { position: absolute; right: 2px; top: 155px; width: 22px; height: 139px; border-radius: 2px; background: #585e62; border: 1px solid #6a7074; box-sizing: border-box; display: flex; flex-direction: column; align-items: center; gap: 3px; color: #3f454c; }
  .navbar i { align-self: flex-end; }
  .navbar > :global(.mini) { margin: 1px 0 2px; }
  .navbar .end { margin-top: auto; }

  .balloon { position: absolute; right: -3px; bottom: 4px; width: 332px; height: 85px; box-sizing: border-box; padding: 4px 6px 0 9px; border-radius: 11px; background: #ffffe1; border: 1px solid #111; color: #1a1a1a; line-height: 10px; }
  .bhead { display: flex; align-items: center; gap: 7px; height: 12px; margin: 0 -1px 3px -3px; }
  .bhead button { margin-left: auto; width: 10px; height: 10px; border: 1px solid #999; background: #fff; color: #000; }
  .balloon p { margin: 0 0 4px; white-space: nowrap; }
  .balloon a { color: #1414ff; text-decoration: underline; }
  .tail { position: absolute; left: 242px; top: 82px; z-index: 2; }

  .cmd { position: absolute; left: 249px; right: 249px; bottom: 0; height: 17px; display: flex; }
  .grip { display: flex; align-items: center; gap: 6px; width: 35px; background: #515151; border: 1px solid #666; box-sizing: border-box; padding-left: 1px; flex: none; }
  .cmd label { flex: 1; display: flex; align-items: center; gap: 4px; padding: 0 3px; background: rgba(214, 214, 216, .88); color: #555; }
  .cmd input { flex: 1; border: 0; padding: 0; background: none; outline: 0; font: italic 8px/12px "Liberation Mono", monospace; }
  .cmd input::placeholder { color: #666; opacity: 1; }
  .up { align-self: center; }

  .status { height: 19px; flex: none; display: flex; justify-content: space-between; background: #3b3b3b; }
  .layouts { display: flex; align-items: flex-start; padding: 1px 0 0 8px; gap: 1px; }
  .layouts button { height: 11px; padding: 0 6px; background: #545454; color: #aaa; border-radius: 2px 2px 6px 6px; }
  .layouts .on { padding: 0 7px; background: linear-gradient(#686868, #9a9a9a); color: #fff; font-weight: 700; }
  .layouts .plus { padding: 0 4px; }
  .layouts .plus :global(svg) { width: 7px; }
  .toggles { display: flex; align-items: center; padding-right: 1px; }
  .toggles button { width: 16px; height: 17px; background: #4f4f4f; border: solid #454545; border-width: 1px 0; }
  .toggles .model { width: 36px; border-right: 1px solid #333; color: #eee; }
  .toggles .arrow { width: 12px; }
  .toggles .slim { width: 13px; }
  .toggles .wide { width: 18px; }
  .toggles .arrow.end { width: 11px; border-right: 1px solid #333; }
  .toggles .ratio { width: 22px; gap: 3px; }
</style>
